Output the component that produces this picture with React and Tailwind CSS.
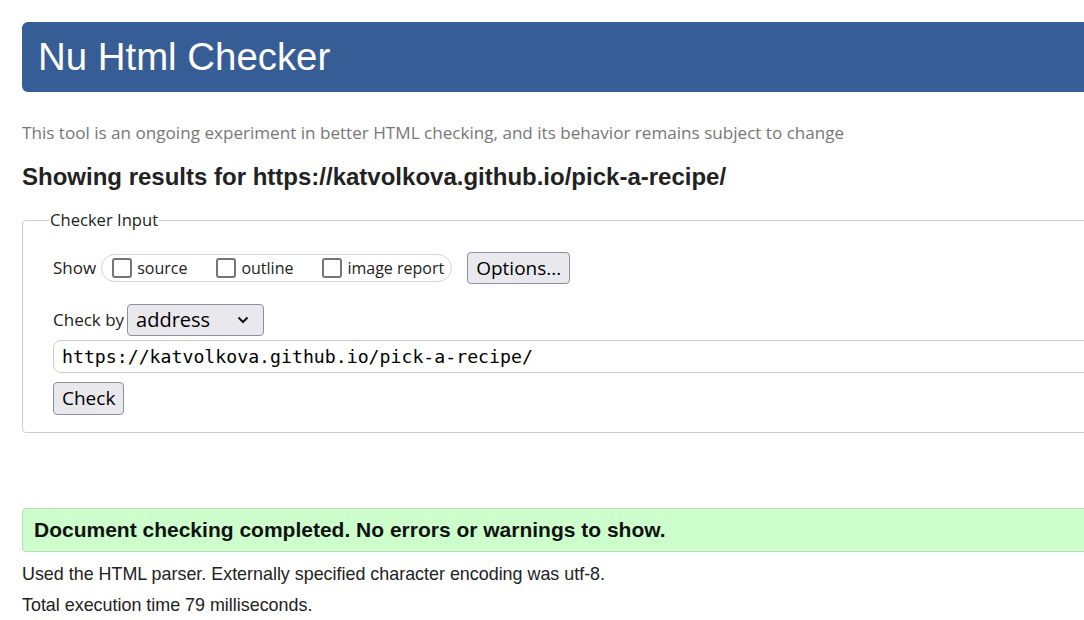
import React from 'react';

const Box = ({ label }) => (
  <label className="flex items-center gap-[5px]">
    <span className="w-[20px] h-[20px] rounded-[3px] border-2 border-[#767676] bg-white" />
    <span>{label}</span>
  </label>
);

const App = () => {
  return (
    <div className="w-full h-[620px] overflow-hidden bg-white">
      <div className="w-[1200px] pl-[22px] pt-[22px]">
        <header className="h-[70px] bg-[#365d96] rounded-l-[6px] flex items-center pl-[16px]">
          <h1 className="text-white text-[38.4px] font-['Liberation_Sans',Arial,sans-serif] leading-none">
            Nu Html Checker
          </h1>
        </header>

        <p className="mt-[29px] text-[17.1px] text-[#777] font-['Open_Sans','Noto_Sans',sans-serif] leading-[24px]">
          This tool is an ongoing experiment in better HTML checking, and its behavior remains subject to change
        </p>

        <h2 className="mt-[18px] text-[24px] font-bold text-[#222] font-['Liberation_Sans',Arial,sans-serif] leading-[28px]">
          Showing results for https://katvolkova.github.io/pick-a-recipe/
        </h2>

        <fieldset className="mt-[18px] border border-[#cccccc] rounded-[4px] pl-[30px] pr-0 pb-[17px] pt-0 font-['Open_Sans','Noto_Sans',sans-serif] text-[#222]">
          <legend className="ml-[-4px] px-[1px] text-[16.6px] leading-[22px]">Checker Input</legend>

          <div className="mt-[21px] flex items-center text-[17px]">
            <span className="mr-[5px]">Show</span>
            <div className="h-[28px] flex items-center gap-[29px] border border-[#d4d4d4] rounded-[14px] pl-[10px] pr-[7px] text-[16px]">
              <Box label="source" />
              <Box label="outline" />
              <Box label="image report" />
            </div>
            <button className="ml-[15px] h-[32px] px-[8px] bg-[#e9e9ed] border border-[#8f8f9d] rounded-[4px] text-[19px] text-black">
              Options...
            </button>
          </div>

          <div className="mt-[20px] flex items-center text-[17px]">
            <span className="mr-[3px]">Check by</span>
            <div className="w-[137px] h-[32px] flex items-center justify-between bg-[#e9e9ed] border border-[#8f8f9d] rounded-[4px] pl-[8px] pr-[14px] text-[20px] text-black">
              <span>address</span>
              <svg width="12" height="8" viewBox="0 0 12 8" fill="none" stroke="#111" strokeWidth="2">
                <path d="M1.5 1.5 L6 6 L10.5 1.5" />
              </svg>
            </div>
          </div>

          <div className="mt-[4px] h-[33px] flex items-center border border-[#cccccc] rounded-[8px] pl-[8px] text-[18.2px] text-black font-['DejaVu_Sans_Mono','Liberation_Mono',monospace]">
            https://katvolkova.github.io/pick-a-recipe/
          </div>

          <button className="mt-[9px] h-[33px] px-[8px] bg-[#e9e9ed] border border-[#8f8f9d] rounded-[4px] text-[19px] text-black">
            Check
          </button>
        </fieldset>

        <div className="mt-[75px] h-[44px] flex items-center bg-[#ccffcc] border border-[#b8dcb8] rounded-l-[4px] pl-[11px] text-[21px] font-bold text-[#111] font-['Liberation_Sans',Arial,sans-serif]">
          Document checking completed. No errors or warnings to show.
        </div>

        <div className="font-['Liberation_Sans',Arial,sans-serif] text-[17.9px] text-[#222]">
          <p className="mt-[10px] leading-[24px]">
            Used the HTML parser. Externally specified character encoding was utf-8.
          </p>
          <p className="mt-[7px] leading-[24px]">Total execution time 79 milliseconds.</p>
        </div>
      </div>
    </div>
  );
};

export default App;
